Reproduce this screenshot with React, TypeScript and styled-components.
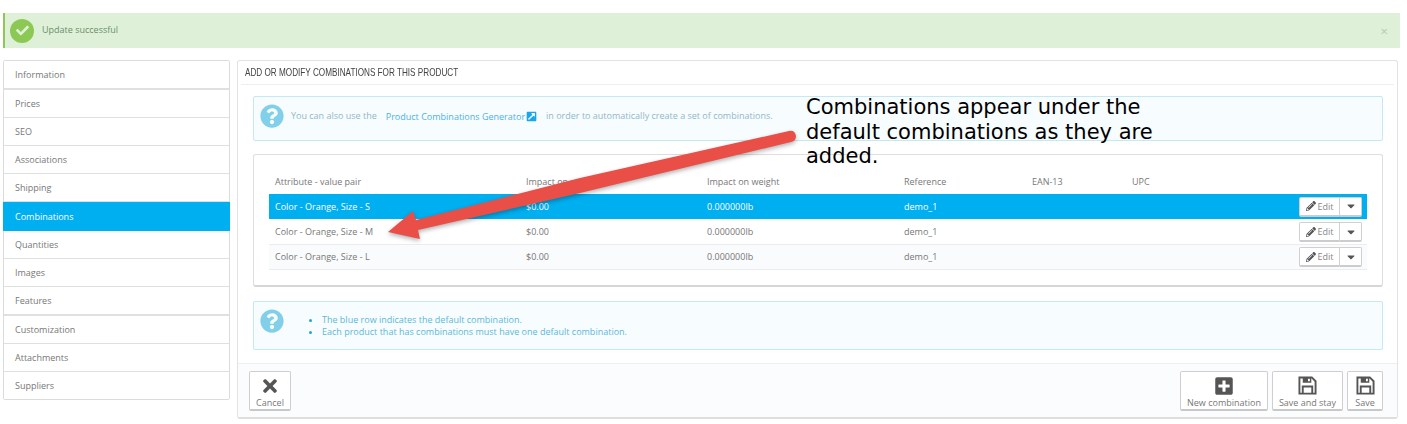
import React from 'react';
import styled, {createGlobalStyle} from 'styled-components';
import {FaCaretDown, FaCheck, FaExternalLinkSquareAlt, FaPencilAlt, FaPlusSquare, FaQuestionCircle, FaTimes} from 'react-icons/fa';

const tabs = [
    {name: 'Information', height: 27, line: 2},
    {name: 'Prices', height: 27, line: 1},
    {name: 'SEO', height: 27, line: 1},
    {name: 'Associations', height: 27, line: 1},
    {name: 'Shipping', height: 27, line: 1},
    {name: 'Combinations', height: 29, line: 0},
    {name: 'Quantities', height: 27, line: 1},
    {name: 'Images', height: 27, line: 1},
    {name: 'Features', height: 27, line: 2},
    {name: 'Customization', height: 27, line: 1},
    {name: 'Attachments', height: 27, line: 1},
    {name: 'Suppliers', height: 27, line: 0},
];
const rows = [
    {label: 'Color - Orange, Size - S', height: 25},
    {label: 'Color - Orange, Size - M', height: 26},
    {label: 'Color - Orange, Size - L', height: 25},
];

const SaveIcon = () => (
    <SaveSvg viewBox="0 0 20 20">
        <path d="M1.5 1.5 H14.5 L18.5 5.5 V18.5 H1.5 Z" fill="none" stroke="#555" strokeWidth="2"/>
        <path d="M5 1 H14 V7 H5 Z M10.5 2.5 V5.5 H12.5 V2.5 Z" fill="#555" fillRule="evenodd"/>
        <path d="M5 18.5 V11 H15 V18.5" fill="none" stroke="#555" strokeWidth="2"/>
    </SaveSvg>
);

const App = () => {
    return (
        <Page>
            <GlobalStyle/>
            <Alert>
                <CheckBadge><FaCheck/></CheckBadge>
                <AlertText>Update successful</AlertText>
                <AlertClose>×</AlertClose>
            </Alert>
            <Columns>
                <TabList>
                    {tabs.map(tab => (
                        <TabItem key={tab.name} $active={tab.name === 'Combinations'} $height={tab.height} $line={tab.line}>{tab.name}</TabItem>
                    ))}
                </TabList>
                <Panel>
                    <PanelHeading><HeadingText>Add or modify combinations for this product</HeadingText></PanelHeading>
                    <PanelBody>
                        <InfoBox $height={45}>
                            <InfoIcon/>
                            <InfoLine>
                                <span>You can also use the</span>
                                <GeneratorLink>Product Combinations Generator<FaExternalLinkSquareAlt/></GeneratorLink>
                                <span>in order to automatically create a set of combinations.</span>
                            </InfoLine>
                        </InfoBox>
                        <TableCard>
                            <TableHead>
                                <Cell>Attribute - value pair</Cell>
                                <Cell>Impact on price</Cell>
                                <Cell>Impact on weight</Cell>
                                <Cell>Reference</Cell>
                                <Cell>EAN-13</Cell>
                                <Cell>UPC</Cell>
                            </TableHead>
                            {rows.map((row, i) => (
                                <TableRow key={row.label} $selected={i === 0} $odd={i === 2} $height={row.height}>
                                    <Cell>{row.label}</Cell>
                                    <Cell>$0.00</Cell>
                                    <Cell>0.000000lb</Cell>
                                    <Cell>demo_1</Cell>
                                    <Cell/>
                                    <Cell/>
                                    <RowActions>
                                        <EditButton><FaPencilAlt/>Edit</EditButton>
                                        <CaretButton><FaCaretDown/></CaretButton>
                                    </RowActions>
                                </TableRow>
                            ))}
                        </TableCard>
                        <InfoBox $height={49} $shift={1}>
                            <InfoIcon/>
                            <HintList>
                                <li>The blue row indicates the default combination.</li>
                                <li>Each product that has combinations must have one default combination.</li>
                            </HintList>
                        </InfoBox>
                    </PanelBody>
                    <PanelFooter>
                        <FooterButton $width={42}><FaTimes/>Cancel</FooterButton>
                        <FooterRight>
                            <FooterButton $width={88}><FaPlusSquare/>New combination</FooterButton>
                            <FooterButton $width={71}><SaveIcon/>Save and stay</FooterButton>
                            <FooterButton $width={36}><SaveIcon/>Save</FooterButton>
                        </FooterRight>
                    </PanelFooter>
                </Panel>
            </Columns>
            <Annotation>Combinations appear under the default combinations as they are added.</Annotation>
            <ArrowArt width="440" height="130" viewBox="0 0 440 130">
                <path d="M2 105 L27 84 L30 93 L194 51 L403 4 Q409 3 410 9 Q410 14 405 15 L194 66 L32 103 L34 112 Z" fill="#e94f47"/>
            </ArrowArt>
        </Page>
    );
};

export default App;

const GlobalStyle = createGlobalStyle`
    html, body {
        margin: 0;
        background: #fff;
    }
    body {
        font-family: "Open Sans", "Liberation Sans", sans-serif;
        font-size: 9px;
        color: #666;
    }
`

const Page = styled.div`
    position: relative;
    width: 1407px;
    height: 424px;
    padding: 13px 7px 0 3px;
    box-sizing: border-box;
    overflow: hidden;
`

const Alert = styled.div`
    display: flex;
    align-items: center;
    height: 35px;
    width: 1397px;
    box-sizing: border-box;
    border-left: 2px solid #8bc954;
    background: #dff0d8;
    padding: 0 12px 0 5px;
`

const CheckBadge = styled.div`
    display: flex;
    align-items: center;
    justify-content: center;
    width: 24px;
    height: 24px;
    border-radius: 50%;
    background: #8bc954;
    color: #dff0d8;
    font-size: 13px;
    margin-right: 8px;
`

const AlertText = styled.span`
    flex: 1;
    color: #6a8f6a;
    margin-top: -3px;
`

const AlertClose = styled.span`
    color: #b5c9ae;
    font-size: 13px;
`

const Columns = styled.div`
    display: flex;
    align-items: flex-start;
    gap: 7px;
    margin-top: 12px;
    width: 1395px;
`

const TabList = styled.div`
    width: 227px;
    box-sizing: border-box;
    border: 1px solid #dcdcdc;
    border-radius: 2px;
    flex-shrink: 0;
`

const TabItem = styled.div<{$active?: boolean; $height: number; $line: number}>`
    display: flex;
    align-items: center;
    height: ${({$height}) => $height}px;
    line-height: 12px;
    padding-left: ${({$active}) => ($active ? 12 : 11)}px;
    background: ${({$active}) => ($active ? '#00aff0' : '#fff')};
    color: ${({$active}) => ($active ? '#fff' : '#777')};
    border-bottom: ${({$line}) => $line}px solid #e0e0e0;
    margin: ${({$active}) => ($active ? '0 -1px' : '0')};
`

const Panel = styled.div`
    flex: 1;
    height: 359px;
    box-sizing: border-box;
    border: 1px solid #e3e3e3;
    border-bottom: 2px solid #dedede;
    border-radius: 3px;
    background: #fff;
    padding: 0 3px;
    display: flex;
    flex-direction: column;
`

const PanelHeading = styled.div`
    height: 24px;
    box-sizing: border-box;
    border-bottom: 1px solid #eee;
    padding: 5px 0 0 4px;
    flex-shrink: 0;
`

const HeadingText = styled.span`
    display: inline-block;
    font-family: "Liberation Sans", sans-serif;
    font-size: 11.5px;
    line-height: 13px;
    white-space: nowrap;
    text-transform: uppercase;
    color: #444;
    transform: scaleX(0.71);
    transform-origin: left center;
`

const PanelBody = styled.div`
    flex: 1;
    padding: 11px 11px 0 12px;
    display: flex;
    flex-direction: column;
    gap: 13px;
`

const InfoBox = styled.div<{$height: number; $shift?: number}>`
    position: relative;
    height: ${({$height}) => $height}px;
    margin-top: ${({$shift}) => $shift ?? 0}px;
    box-sizing: border-box;
    border: 1px solid #c5e9f3;
    background: #f7fcfe;
    border-radius: 2px;
    color: #5fc0dc;
    padding-left: 37px;
    flex-shrink: 0;
`

const InfoIcon = styled(FaQuestionCircle)`
    position: absolute;
    left: 6px;
    top: 7px;
    width: 24px;
    height: 24px;
    color: #81cfe8;
`

const InfoLine = styled.div`
    display: flex;
    align-items: center;
    height: 37px;
    color: #8fb9c8;
    gap: 9px;
`

const GeneratorLink = styled.span`
    display: inline-flex;
    align-items: center;
    gap: 1px;
    color: #4fb0e8;
    padding-top: 2px;
    svg {
        color: #1ba5ea;
        font-size: 11px;
    }
`

const TableCard = styled.div`
    height: 133px;
    box-sizing: border-box;
    border: 1px solid #dedede;
    border-bottom: 2px solid #d6d6d6;
    border-radius: 3px;
    padding: 15px;
    flex-shrink: 0;
`

const tableColumns = '251px 181px 197px 128px 100px 60px 1fr';

const TableHead = styled.div`
    display: grid;
    grid-template-columns: ${tableColumns};
    align-items: center;
    height: 24px;
    box-sizing: border-box;
    padding-bottom: 1px;
    color: #777;
`

const TableRow = styled.div<{$selected?: boolean; $odd?: boolean; $height: number}>`
    display: grid;
    grid-template-columns: ${tableColumns};
    align-items: center;
    height: ${({$height}) => $height}px;
    box-sizing: border-box;
    padding-bottom: ${({$odd}) => ($odd ? 1 : 0)}px;
    border-bottom: 1px solid ${({$selected}) => ($selected ? '#00aff0' : '#eaedef')};
    background: ${({$selected, $odd}) => ($selected ? '#00aff0' : $odd ? '#fafbfd' : '#fff')};
    color: ${({$selected}) => ($selected ? '#fff' : '#777')};
`

const Cell = styled.div`
    padding-left: 6px;
    white-space: nowrap;
`

const RowActions = styled.div`
    display: flex;
    justify-content: flex-end;
    padding: 1px 5px 0 0;
`

const EditButton = styled.div`
    display: flex;
    align-items: center;
    justify-content: center;
    gap: 2px;
    width: 41px;
    height: 20px;
    box-sizing: border-box;
    background: #fff;
    border: 1px solid #d0d0d0;
    border-bottom: 2px solid #ccc;
    border-radius: 2px 0 0 2px;
    color: #888;
    svg {
        color: #555;
        font-size: 10px;
    }
`

const CaretButton = styled(EditButton)`
    width: 22px;
    border-left: none;
    border-radius: 0 2px 2px 0;
    svg {
        font-size: 12px;
    }
`

const HintList = styled.ul`
    margin: 0;
    padding: 0 0 0 31px;
    position: relative;
    top: 12px;
    line-height: 12px;
    color: #5cb8d8;
    li::marker {
        color: #1fa7d0;
    }
`

const PanelFooter = styled.div`
    display: flex;
    justify-content: space-between;
    align-items: flex-start;
    height: 54px;
    margin: 0 -3px;
    padding: 7px 14px 0 11px;
    box-sizing: border-box;
    background: #fbfcfe;
    border-top: 1px solid #eee;
    flex-shrink: 0;
`

const FooterRight = styled.div`
    display: flex;
    gap: 4px;
`

const FooterButton = styled.div<{$width: number}>`
    display: flex;
    flex-direction: column;
    align-items: center;
    justify-content: space-between;
    width: ${({$width}) => $width}px;
    height: 40px;
    box-sizing: border-box;
    padding: 4px 0 0;
    background: #fff;
    border: 1px solid #cfcfcf;
    border-bottom: 2px solid #c8c8c8;
    border-radius: 2px;
    color: #777;
    white-space: nowrap;
    > svg {
        color: #555;
        font-size: 20px;
    }
`

const SaveSvg = styled.svg`
    width: 19px;
    height: 19px;
`

const Annotation = styled.div`
    position: absolute;
    left: 806px;
    top: 95px;
    width: 360px;
    font-family: "DejaVu Sans", "Noto Sans", sans-serif;
    font-size: 21px;
    line-height: 24.5px;
    color: #000;
`

const ArrowArt = styled.svg`
    position: absolute;
    left: 386px;
    top: 127px;
    filter: drop-shadow(0 2px 2px rgba(0, 0, 0, 0.3));
`
